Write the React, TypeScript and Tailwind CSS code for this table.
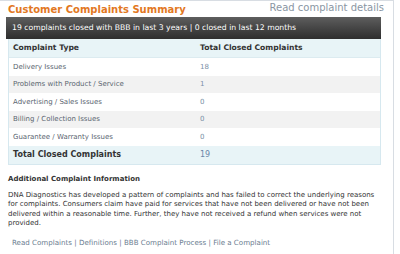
const rows = [
  { type: "Delivery Issues", total: "18" },
  { type: "Problems with Product / Service", total: "1" },
  { type: "Advertising / Sales Issues", total: "0" },
  { type: "Billing / Collection Issues", total: "0" },
  { type: "Guarantee / Warranty Issues", total: "0" },
];

export default function App() {
  return (
    <div
      className="w-[400px] h-[254px] bg-white overflow-hidden"
      style={{ fontFamily: '"DejaVu Sans", Verdana, sans-serif' }}
    >
      <div className="w-[394px] h-[254px] border-t border-r border-[#d8dde3] pl-[6px] pr-[12px]">
        {/* title row */}
        <div className="flex items-end justify-between h-[16px] pl-[2px]">
          <h1 className="text-[10px] font-bold text-[#e2781f] leading-none pb-[2px]">
            Customer Complaints Summary
          </h1>
          <a className="text-[10px] text-[#8a96a3] leading-none pb-[4px] -mr-[3px]">
            Read complaint details
          </a>
        </div>

        {/* dark summary bar */}
        <div className="h-[22px] flex items-center px-[6px] bg-gradient-to-b from-[#5e5e5e] to-[#2e2e2e] text-white text-[7.7px]">
          19 complaints closed with BBB in last 3 years | 0 closed in last 12 months
        </div>

        {/* table */}
        <div className="ml-[2px] border-x border-[#d6e8ef] text-[7px]">
          <div className="h-[19px] flex items-center bg-[#e8f4f7] font-bold text-[#333] text-[7.6px] border-b border-[#dcebf0]">
            <div className="w-[191px] pl-[4px]">Complaint Type</div>
            <div>Total Closed Complaints</div>
          </div>
          {rows.map((r, i) => (
            <div
              key={r.type}
              className={`h-[17.6px] flex items-center ${i % 2 === 1 ? "bg-[#f2f2f2]" : "bg-white"}`}
            >
              <div className="w-[191px] pl-[4px] text-[#5a6570]">{r.type}</div>
              <div className="text-[#7a8fa6]">{r.total}</div>
            </div>
          ))}
          <div className="h-[19px] flex items-center bg-[#e8f4f7] border-b border-[#d6e8ef]">
            <div className="w-[191px] pl-[4px] font-bold text-[#333] text-[8px]">
              Total Closed Complaints
            </div>
            <div className="text-[#6a86a8] text-[8px]">19</div>
          </div>
        </div>

        {/* additional info */}
        <div className="pl-[2px] mt-[11px]">
          <h2 className="text-[7px] font-bold text-[#333] leading-none">
            Additional Complaint Information
          </h2>
          <p className="mt-[8px] text-[7px] leading-[9.5px] text-[#333] whitespace-nowrap">
            DNA Diagnostics has developed a pattern of complaints and has failed to correct the underlying reasons
            <br />
            for complaints. Consumers claim have paid for services that have not been delivered or have not been
            <br />
            delivered within a reasonable time. Further, they have not received a refund when services were not
            <br />
            provided.
          </p>
          <div className="mt-[9px] pl-[4px] text-[7.1px] text-[#6a7c90]">
            <a>Read Complaints</a> | <a>Definitions</a> | <a>BBB Complaint Process</a> |{" "}
            <a>File a Complaint</a>
          </div>
        </div>
      </div>
    </div>
  );
}
